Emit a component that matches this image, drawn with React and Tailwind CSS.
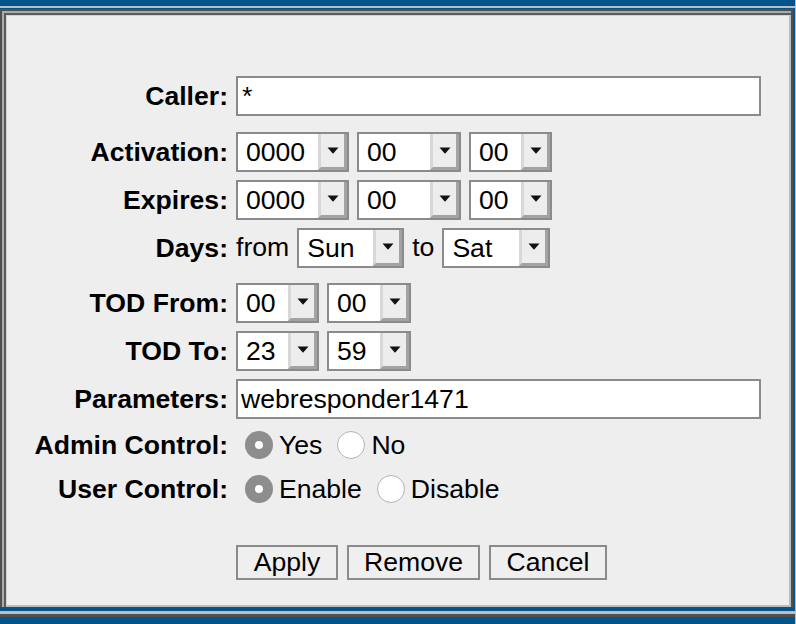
import React from "react";

const font = "font-['Liberation_Sans',Arial,Helvetica,sans-serif]";

const Arrow = () => (
  <svg width="12" height="7" viewBox="0 0 12 7">
    <path d="M0.5 0.5h11L6 6.8z" fill="#111" />
  </svg>
);

const Select = ({ value, width }) => {
  return (
    <div className={`flex h-[40px] shrink-0 border-2 border-[#8b8b8b] bg-white ${width}`}>
      <span className="flex-1 pl-[8px] text-[26.6px] leading-[36px] text-black">
        {value}
      </span>
      <span className="flex w-[29px] items-center justify-center border-b-[3px] border-l-[3px] border-r-[3px] border-b-[#a3a3a3] border-l-[#d8d8d8] border-r-[#a3a3a3] bg-[#ededed]">
        <Arrow />
      </span>
    </div>
  );
};

const Radio = ({ checked }) => {
  if (checked) {
    return (
      <span className="ml-[9px] mr-[6px] flex h-[28px] w-[28px] shrink-0 items-center justify-center rounded-full bg-[#8d8d8d]">
        <span className="h-[8px] w-[8px] rounded-full bg-white" />
      </span>
    );
  }

  return (
    <span className="ml-[15px] mr-[6px] h-[28px] w-[28px] shrink-0 rounded-full border border-[#b3b3b3] bg-white" />
  );
};

const Row = ({ label, className = "", children }) => {
  return (
    <div className={`flex items-center ${className}`}>
      <div className="w-[221px] shrink-0 text-right text-[26.6px] font-bold leading-none text-black">
        {label}
      </div>
      <div className="ml-[8px] flex items-center gap-[8px] text-[26.6px] text-black">
        {children}
      </div>
    </div>
  );
};

const Button = ({ children, width }) => {
  return (
    <button
      type="button"
      className={`h-[35px] border-2 border-[#8b8b8b] bg-[#efefef] text-[26.6px] leading-none text-black ${width}`}
    >
      {children}
    </button>
  );
};

export default function App() {
  return (
    <div className={`flex h-[624px] w-[796px] flex-col border-r border-r-[#bdbdbd] bg-[#03548a] ${font}`}>
      <div className="h-[6px] shrink-0" />
      <div className="h-[2px] shrink-0 bg-[#bdbdbd]" />
      <div className="h-[1px] shrink-0" />

      <div className="mr-[2px] flex h-[598px] shrink-0 flex-col border-l-2 border-r-2 border-t-2 border-[#505050]">
        <div className="flex flex-1 flex-col border-l-2 border-t-2 border-[#ababab]">
          <div className="flex flex-1 flex-col border-l-2 border-t-2 border-[#5c5c5c]">
            <div className="flex flex-1 flex-col border-b-2 border-l border-r-2 border-t border-b-[#bdbdbd] border-l-[#d2d2d2] border-r-[#bdbdbd] border-t-[#d2d2d2] bg-[#eeeeee] pt-[60px]">
              <Row label="Caller:">
                <div className="h-[40px] w-[525px] border-2 border-[#8b8b8b] bg-white px-[4px] text-[26.6px] leading-[36px]">
                  *
                </div>
              </Row>

              <Row label="Activation:" className="mt-[16px]">
                <Select value="0000" width="w-[113px]" />
                <Select value="00" width="w-[104px]" />
                <Select value="00" width="w-[83px]" />
              </Row>

              <Row label="Expires:" className="mt-[8px]">
                <Select value="0000" width="w-[113px]" />
                <Select value="00" width="w-[104px]" />
                <Select value="00" width="w-[83px]" />
              </Row>

              <Row label="Days:" className="mt-[8px]">
                <span>from</span>
                <Select value="Sun" width="w-[107px]" />
                <span>to</span>
                <Select value="Sat" width="w-[108px]" />
              </Row>

              <Row label="TOD From:" className="mt-[15px]">
                <Select value="00" width="w-[83px]" />
                <Select value="00" width="w-[84px]" />
              </Row>

              <Row label="TOD To:" className="mt-[8px]">
                <Select value="23" width="w-[83px]" />
                <Select value="59" width="w-[84px]" />
              </Row>

              <Row label="Parameters:" className="mt-[8px]">
                <div className="h-[40px] w-[525px] border-2 border-[#8b8b8b] bg-white px-[3px] text-[26.6px] leading-[36px]">
                  webresponder1471
                </div>
              </Row>

              <div className="mt-[8px] flex h-[36px] items-center">
                <div className="w-[221px] shrink-0 text-right text-[26.6px] font-bold leading-none text-black">
                  Admin Control:
                </div>
                <div className="ml-[8px] flex items-center text-[26.6px] leading-none text-black">
                  <Radio checked />
                  <span>Yes</span>
                  <Radio />
                  <span>No</span>
                </div>
              </div>

              <div className="mt-[8px] flex h-[36px] items-center">
                <div className="w-[221px] shrink-0 text-right text-[26.6px] font-bold leading-none text-black">
                  User Control:
                </div>
                <div className="ml-[8px] flex items-center text-[26.6px] leading-none text-black">
                  <Radio checked />
                  <span>Enable</span>
                  <Radio />
                  <span>Disable</span>
                </div>
              </div>

              <div className="ml-[229px] mt-[38px] flex gap-[9px]">
                <Button width="w-[102px]">Apply</Button>
                <Button width="w-[133px]">Remove</Button>
                <Button width="w-[118px]">Cancel</Button>
              </div>
            </div>
          </div>
        </div>
      </div>

      <div className="h-[4px] shrink-0" />
      <div className="h-[3px] shrink-0 bg-[#bdbdbd]" />
      <div className="h-[3px] shrink-0 bg-[#505050]" />
      <div className="flex-1" />
    </div>
  );
}
